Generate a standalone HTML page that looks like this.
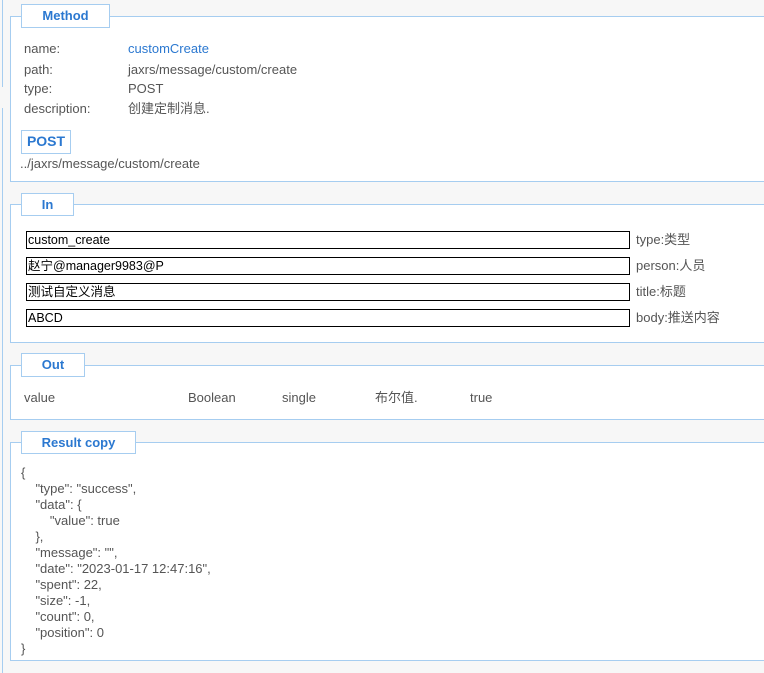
<!DOCTYPE html>
<html><head><meta charset="utf-8"><style>
body{margin:0;width:764px;height:673px;background:#f7f7f7;position:relative;overflow:hidden;font-family:"Liberation Sans","Noto Sans CJK SC",sans-serif;font-size:13px;color:#555}
.a{position:absolute;white-space:nowrap;line-height:16px}
.box{position:absolute;left:10px;width:800px;background:#fff;border:1px solid #a6cdf0}
.lg{position:absolute;background:#fff;border:1px solid #a6cdf0;color:#2b78d0;font-weight:bold;font-size:13px;text-align:center;line-height:21px}
.in{position:absolute;left:26px;width:601px;height:16px;border:1px solid #000;background:#fff;color:#000;font-size:12.5px;line-height:16px;padding-left:1px;box-sizing:content-box;white-space:nowrap}
.vl{position:absolute;left:2px;width:1px;background:#a6cdf0}
</style></head><body>
<div class="vl" style="top:0;height:87px"></div>
<div class="vl" style="top:108px;height:565px"></div>

<div class="box" style="top:16px;height:164px"></div>
<div class="lg" style="left:21px;top:4px;width:87px;height:22px">Method</div>
<div class="a" style="left:24px;top:41px">name:</div><div class="a" style="left:128px;top:41px;color:#2b78d0">customCreate</div>
<div class="a" style="left:24px;top:62px">path:</div><div class="a" style="left:128px;top:62px">jaxrs/message/custom/create</div>
<div class="a" style="left:24px;top:81px">type:</div><div class="a" style="left:128px;top:81px">POST</div>
<div class="a" style="left:24px;top:101px">description:</div><div class="a" style="left:128px;top:101px">创建定制消息.</div>
<div class="lg" style="left:21px;top:130px;width:48px;height:22px;font-size:14px">POST</div>
<div class="a" style="left:20px;top:156px">../jaxrs/message/custom/create</div>

<div class="box" style="top:204px;height:137px"></div>
<div class="lg" style="left:21px;top:193px;width:51px;height:21px">In</div>
<div class="in" style="top:231px">custom_create</div><div class="a" style="left:636px;top:232px">type:类型</div>
<div class="in" style="top:257px">赵宁@manager9983@P</div><div class="a" style="left:636px;top:258px">person:人员</div>
<div class="in" style="top:283px">测试自定义消息</div><div class="a" style="left:636px;top:284px">title:标题</div>
<div class="in" style="top:309px">ABCD</div><div class="a" style="left:636px;top:310px">body:推送内容</div>

<div class="box" style="top:365px;height:53px"></div>
<div class="lg" style="left:21px;top:353px;width:62px;height:22px">Out</div>
<div class="a" style="left:24px;top:390px">value</div>
<div class="a" style="left:188px;top:390px">Boolean</div>
<div class="a" style="left:282px;top:390px">single</div>
<div class="a" style="left:375px;top:390px">布尔值.</div>
<div class="a" style="left:470px;top:390px">true</div>

<div class="box" style="top:442px;height:217px"></div>
<div class="lg" style="left:21px;top:431px;width:113px;height:21px">Result copy</div>
<div class="a" style="left:21px;top:465px;line-height:16px">{<br>&nbsp;&nbsp;&nbsp;&nbsp;"type": "success",<br>&nbsp;&nbsp;&nbsp;&nbsp;"data": {<br>&nbsp;&nbsp;&nbsp;&nbsp;&nbsp;&nbsp;&nbsp;&nbsp;"value": true<br>&nbsp;&nbsp;&nbsp;&nbsp;},<br>&nbsp;&nbsp;&nbsp;&nbsp;"message": "",<br>&nbsp;&nbsp;&nbsp;&nbsp;"date": "2023-01-17 12:47:16",<br>&nbsp;&nbsp;&nbsp;&nbsp;"spent": 22,<br>&nbsp;&nbsp;&nbsp;&nbsp;"size": -1,<br>&nbsp;&nbsp;&nbsp;&nbsp;"count": 0,<br>&nbsp;&nbsp;&nbsp;&nbsp;"position": 0<br>}</div>
</body></html>
